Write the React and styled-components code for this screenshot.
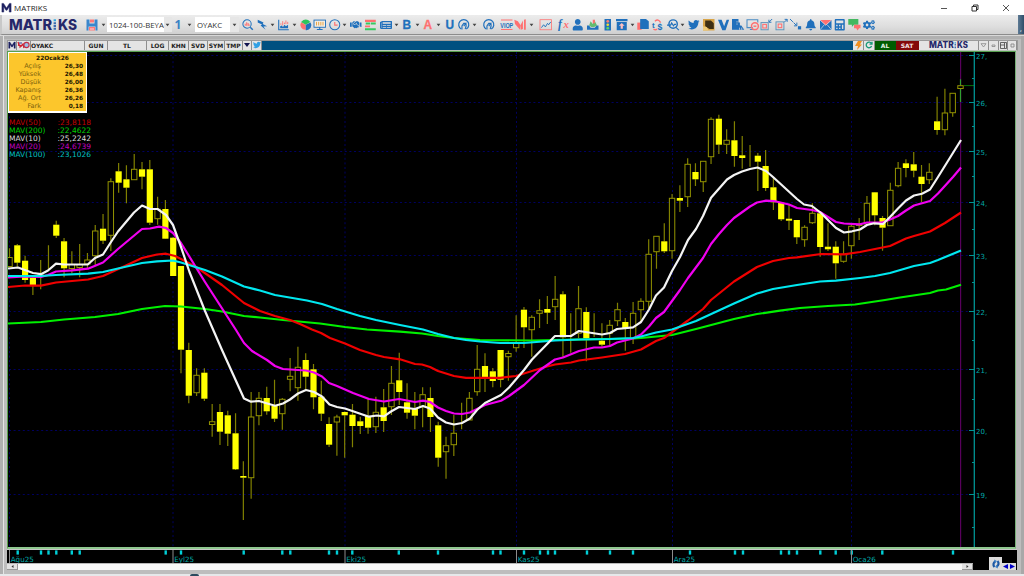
// Import dependencies
import React from 'react';
import styled, { createGlobalStyle } from 'styled-components';
import { FaHandshake, FaNewspaper, FaTwitter, FaBell, FaCalculator, FaCogs, FaUser } from 'react-icons/fa';

//----------------  Data  ----------------//
// Each candle: high, body top, body bottom, low, filled
const candles = [
    [248.3, 257.5, 266.5, 267, 0], [244, 245.3, 262.7, 267, 1], [255.7, 260.7, 280, 282.7, 1],
    [275, 277.7, 285, 295, 1], [260, 275, 276, 289.3, 0], [245.3, 255.3, 255.3, 270, 0],
    [220.7, 224.7, 235.7, 238, 1], [238, 241.3, 268.3, 277.3, 1], [251.3, 264.5, 268.5, 273.3, 0],
    [244, 264.5, 267.5, 277.3, 0], [253, 260, 264, 268, 0], [225, 231, 255.7, 265, 0],
    [214, 228.7, 240.7, 244, 1], [178.3, 181.7, 235.3, 251, 0], [163, 171.3, 182.7, 192.7, 1],
    [165.3, 179.3, 187.7, 203.3, 1], [154, 169.3, 179.7, 180, 0], [162, 169.3, 176.7, 189.3, 1],
    [160, 169.3, 222.7, 225, 1], [196.7, 209.3, 218.7, 224.7, 0], [200, 209, 238.7, 239, 1],
    [237, 237.7, 276, 276, 1], [266, 266, 349.7, 373.3, 1], [342.7, 350, 395.7, 403.3, 1],
    [368.3, 375.3, 392.7, 396, 0], [368.3, 372.7, 398.7, 401, 1], [404, 421.7, 424.5, 436.7, 0],
    [404, 412, 431.7, 445, 1], [410.7, 415.3, 433.7, 446, 1], [413.3, 433.3, 469.3, 470, 1],
    [461.3, 476, 477.7, 520, 1], [392, 417, 477.7, 498.7, 0], [392, 398.3, 415.7, 425.3, 0],
    [386.7, 398, 411.3, 414.7, 1], [379.7, 406, 418.7, 422, 1], [398, 399.3, 413.7, 429.7, 0],
    [358, 376.3, 379.3, 391.3, 0], [346.7, 367.3, 387.7, 400.7, 0], [353.3, 360, 376.7, 390, 1],
    [364, 369.3, 397.3, 409.3, 1], [380.7, 396.7, 413.7, 421, 1], [417.3, 424, 444.7, 447, 1],
    [414.7, 417, 422, 455.7, 0], [411.5, 412, 415.3, 457.7, 1], [404, 414.7, 426, 447.3, 1],
    [416.7, 421.3, 426, 434, 1], [398.3, 416, 427.7, 433.7, 1], [396.7, 412.3, 426.7, 433, 0],
    [389, 407.3, 421, 432, 1], [366, 383.3, 406.7, 415, 0], [352.7, 380.3, 392, 405, 1],
    [383.3, 402.3, 412.7, 418.7, 1], [392, 408.7, 415.7, 429.3, 1], [387.3, 394.7, 406.7, 427.3, 0],
    [387.3, 398, 417, 432, 1], [421.7, 425.3, 457.7, 466.7, 1], [436.7, 445.7, 451.7, 478.7, 0],
    [415, 433.3, 444.7, 456, 0], [402.7, 419.7, 419.7, 429.3, 0], [392, 398.3, 420, 420, 0],
    [345, 369.3, 391.7, 395.7, 0], [353.3, 366, 377.3, 392, 1], [368, 371.3, 381, 387.3, 1],
    [350, 350, 379.7, 387.3, 1], [350.7, 353.5, 356.7, 380.7, 0], [315.3, 343.3, 347.7, 351.7, 0],
    [307, 309.7, 327.3, 348, 1], [315.3, 317.3, 329.7, 356.7, 0], [299.3, 310.7, 313.3, 328, 0],
    [296, 309, 312.7, 324, 1], [276, 299.3, 306.7, 320, 0], [291.3, 294.3, 337.3, 357.3, 1],
    [313.3, 332.7, 332.7, 352.7, 0], [286, 308.7, 333.3, 338, 0], [307.3, 312, 338.3, 361.3, 1],
    [313.3, 332.7, 332.7, 337, 0], [323.3, 340.7, 344.7, 346.7, 1], [320, 325.3, 333.3, 346, 0],
    [302.7, 309.7, 320.7, 326, 0], [318, 322, 328.7, 350.7, 1], [302, 313.3, 338.6, 344, 0],
    [298.3, 301.3, 309.7, 321, 0], [239.3, 254.3, 301.3, 308, 0], [236, 236.3, 251.7, 268.7, 0],
    [223.3, 241.3, 251.3, 253, 1], [194, 198.3, 250.7, 258.7, 0], [185.3, 198, 200.7, 212, 1],
    [158.3, 164.3, 196.7, 207, 0], [163.3, 172, 179.3, 186, 1], [161, 161.3, 181.7, 192, 0],
    [117.3, 119.3, 156.7, 164, 0], [114.7, 118.7, 144.7, 154, 1], [129.3, 140.3, 144.3, 154, 0],
    [121.3, 140.3, 156, 166.7, 1], [136, 155.3, 158, 168.7, 1], [145, 155.5, 155.5, 166.7, 0],
    [153, 155.7, 161.7, 191, 1], [150, 166, 188, 191, 1], [178.3, 187.3, 202.3, 210, 1],
    [202, 202.7, 219.3, 221, 1], [205, 218.7, 220.7, 230, 1], [220, 220, 237.3, 244, 1],
    [225.3, 227.3, 239.7, 246.7, 0], [203.3, 213.3, 222.7, 224, 0], [211, 213.3, 247, 256.7, 1],
    [223.3, 246.7, 249.3, 251, 1], [241.3, 246.7, 263.3, 278.7, 1], [241.3, 254.3, 261.3, 262.7, 0],
    [225, 226.3, 245.7, 258.7, 0], [218, 224.5, 225.5, 240, 0], [196, 203.3, 224, 225, 0],
    [192, 192.3, 215.3, 225.3, 1], [216, 218, 227.7, 250.7, 1], [182.7, 190.3, 225.7, 226, 0],
    [162, 168.3, 185.7, 187.3, 0], [159.3, 163.3, 168, 177.3, 1], [152, 164.3, 170.7, 177.3, 1],
    [165, 176.7, 184, 202, 1], [163.3, 172.3, 179.7, 184, 0], [96.7, 121.3, 130, 134.7, 1],
    [88.7, 113, 129.7, 135.3, 0], [93, 93.3, 112.7, 116.7, 0], [79.3, 85.7, 88.5, 102, 0],
];

// Moving averages
const averages = [
    { color: '#00f000', points: '8,323.5 41,322 64,319.5 95,317 118,314 142,309 165,306 181,306.5 205,309 222,311.5 244,316 260,317.5 283,320 320,323.5 345,327 367,329.5 400,331.7 422,333.5 438,336 454,338 480,340 532,340.5 579,339.5 633,338.5 641,338 672,335 696,329 734,319 757,314 780,310.7 800,308 828,306 855,304.5 885,300 900,297.5 930,293 938,290.5 946,289.5 961,284.7' },
    { color: '#f00000', points: '8,287 25,285.5 41,285.7 56,282.5 88,279.5 103,276 126,265.5 142,258 157,254.5 166,253.7 175,256 183,260 197,267.5 222,285 244,303 260,311 275,316 290,320 300,324 312,329.5 321,333 330,338 345,343.5 360,350 376,355 384,357 400,359.3 415,364 422,364.5 430,367 438,371 454,376 466,377.8 500,377.8 516,376 532,371 547,366.5 555,364.5 571,362.5 579,360.5 602,357.5 625,354 641,349.5 656,341 664,338 688,320.5 703,309 711,300 734,281.5 757,267 773,261 789,258 797,257.3 821,254 844,254.3 860,252 875,249 890,246 906,238.5 914,236 930,231.5 945,223 961,212.5' },
    { color: '#f000f0', points: '8,277.5 25,276.5 41,277 48,275 56,271.5 72,270.3 88,268.7 103,262.5 118,249 142,229 150,228.5 159,226.7 166,228 173,233 181,243 205,282 236,330 244,343 252,351 267,360 275,366 283,369 298,370 306,370.5 314,372.5 322,376.5 329,383 337,386 353,393 369,399 384,401.5 399,399 415,402 423,400.7 430,402 438,407.5 446,411 454,413.5 462,414 470,412.5 485,405 501,400.7 509,396 524,385 540,370 555,359.5 563,357.5 579,351 594,347.5 602,347.5 610,346 617,342.5 633,338.5 641,334.5 649,326.5 656,318 664,312 672,301 680,290 688,278 703,258 711,244 719,234 727,225 734,218 750,206.5 757,202.5 766,200.7 774,201 789,204.5 797,208 812,210 820,212 828,217 836,222 844,223.5 860,224.3 867,222.5 883,222.3 890,219.5 898,216 906,210.5 914,205.5 930,201 938,193.5 953,177 961,167.5' },
    { color: '#00e8f0', points: '8,276 41,276 56,275 88,273.7 103,272 118,268.5 142,263 157,261.3 173,260.5 181,262.5 205,270 222,276.5 244,286.5 260,290.5 275,295 307,300.5 322,304 337,309 360,316 376,320 400,325 423,329.5 438,334 454,338 466,340 480,341.5 500,343 524,343 555,340.5 579,339.5 610,339 633,338 641,336.5 656,332.5 672,329.5 696,321 734,303.5 757,293.5 773,289 797,285 820,281.5 836,280.7 860,278 875,276 890,273 914,266 930,263 938,260 961,250.5' },
    { color: '#f4f4f4', points: '8,268.5 18,267.5 33,273 41,274.2 48,270.5 56,263.7 64,264.5 88,264.3 95,258 103,254.5 111,242 118,231.5 134,212.5 142,205.5 150,209 157.5,209 166,215 173,225 181,247 189.5,272 205,311 222,350 244,398.5 251,401.7 259,401 275,405.7 283,403.5 290,399.5 298,393.5 306,390 314,392 322,396.5 329.5,404.5 337,407 345,408.5 361,414 369,416.7 377,415.5 384,416.3 391,411.5 399,407 415,409 423,406 430,408.5 438,417.5 446,422.5 454,424.5 462,423 470,418.5 477,410 485,403 501,395 509,387.5 524,370 532,359.5 555,336 571,336 579,331 602,334.5 610,333 617,329 633,327.3 641,322 649,309.5 656,295.5 664,287.5 672,271 680,257 688,240 696,229 703,216 711,197.7 727,179.5 734,175 742,171.5 750,169 757.5,167.5 766,171 773,177 797,199 804,204.5 812,206 821,213 836,228 844,232.5 852,231.3 860,229.5 867,225 874,223.3 883,224 890,217 898,208.5 906,200.5 914,195.5 922,193.7 930,189.5 938,177 961,140' },
];

const prices = [[27, 55.5], [26, 102.5], [25, 151.5], [24, 202.5], [23, 255.5], [22, 311.5], [21, 369.5], [20, 430.5], [19, 494.5]];
const halfTicks = [78.5, 126.5, 176.5, 229.5, 282.5, 340.5, 399.5, 462.5, 527.5];
const months = [['Ağu25', 9.5], ['Eyl25', 173], ['Eki25', 345], ['Kas25', 516.5], ['Ara25', 672.5], ['Oca26', 851.5]];
const dayTicks = [17.7, 41, 48.5, 56.3, 71.8, 79.7, 165.7, 181, 243.7, 282.3, 290.3, 329, 337, 352.3, 398.8, 438, 493, 500.5, 524, 540, 548, 555, 587, 610, 633, 690, 735, 743, 781, 789, 797, 820.3, 835.7, 851.7, 882.3, 953];

const quote = [['Açılış', '26,30'], ['Yüksek', '26,48'], ['Düşük', '26,00'], ['Kapanış', '26,36'], ['Ağ. Ort', '26,26'], ['Fark', '0,18']];
const legend = [
    ['MAV(50)', ':23,8118', '#c00000'],
    ['MAV(200)', ':22,4622', '#00d000'],
    ['MAV(10)', ':25,2242', '#dcdcdc'],
    ['MAV(20)', ':24,6739', '#c000c0'],
    ['MAV(100)', ':23,1026', '#00c0c0'],
];

const candleX = (i) => 9.5 + i * 7.795;

//----------------  Styles  ----------------//
const GlobalStyle = createGlobalStyle`
    *{ box-sizing: border-box; }
    body{
        margin: 0;
        overflow: hidden;
        background: #c4c4c4;
    }
    svg{ display: block; flex: none; overflow: visible; }
`;
// Whole window
const Window = styled.div`
    width: 1024px;
    height: 576px;
    display: flex;
    flex-direction: column;
    font-family: 'Open Sans', 'Noto Sans', sans-serif;
    overflow: hidden;
`;
const TitleBar = styled.div`
    height: 15px;
    display: flex;
    align-items: center;
    background: #fff;
    padding: 0 14px 0 1px;
    gap: 2px;
    font-size: 8px;
    color: #222;
`;
const WindowButtons = styled.div`
    margin-left: auto;
    display: flex;
    gap: 23px;
`;
const ToolBar = styled.div`
    height: 20px;
    display: flex;
    align-items: center;
    background: linear-gradient(#ececec, #dedede 60%, #cfcfcf);
    border-left: 2px solid #c8c8c8;
    border-bottom: 1px solid #8c8c8c;
    padding-left: 7px;
`;
// Save button with its menu arrow
const SaveGroup = styled.div`
    display: flex;
    align-items: center;
    gap: 3px;
    margin-left: 9px;
    width: 21px;
`;
const Combo = styled.div`
    width: ${props => props.$w}px;
    height: 15px;
    margin-right: ${props => props.$gap || 0}px;
    display: flex;
    align-items: center;
    background: #fff;
    padding-left: 2px;
    font-size: 7.8px;
    color: #333;
    white-space: nowrap;
`;
const ComboText = styled.span`
    flex: 1;
`;
const ComboArrow = styled.span`
    width: 9px;
    height: 15px;
    display: flex;
    align-items: center;
    justify-content: center;
    background: #e6e6e6;
`;
const CountGroup = styled.div`
    display: flex;
    align-items: center;
    justify-content: center;
    gap: 6px;
    width: 23px;
    font-weight: bold;
    font-size: 12px;
    color: #3a82c4;
`;
const Tool = styled.div`
    width: ${props => props.$menu ? 21.45 : 14.6}px;
    height: 16px;
    margin-left: ${props => props.$sep ? 3.2 : 0}px;
    display: flex;
    align-items: center;
    flex: none;
    gap: 2px;
    padding-left: 1.3px;
`;
const ToolEdge = styled.div`
    margin-left: auto;
    width: 6px;
    height: 19px;
    background: linear-gradient(90deg, #5d7a94, #2f4d69);
    color: #fff;
    font-size: 7px;
    line-height: 27px;
    text-align: center;
`;
const Workspace = styled.div`
    flex: 1;
    display: flex;
    flex-direction: column;
    background: #bdbdbd;
    border-top: 1px solid #d8d8d8;
    padding: 4px 6px 0 7px;
    box-shadow: inset 3px 0 0 #b0b0b0, inset 4px 0 0 #e4e4e4, inset -3px 0 0 #a8a8a8, inset 0 3px 0 #b0b0b0;
`;
const Header = styled.div`
    height: 11px;
    display: flex;
    align-items: stretch;
    background: #005080;
    border: 1px solid #9a9a9a;
    border-bottom-color: #b8c4b8;
    font-family: 'DejaVu Sans', sans-serif;
    font-weight: bold;
    font-size: 6px;
    line-height: 7px;
    color: #222;
`;
const Cell = styled.div`
    width: ${props => props.$w}px;
    display: flex;
    align-items: center;
    justify-content: ${props => props.$left ? 'flex-start' : 'center'};
    background: ${props => props.$bg || '#e4e4e4'};
    color: ${props => props.$color || '#222'};
    border-right: 1px solid ${props => props.$bg || '#8e8e8e'};
    padding-bottom: 1px;
    white-space: nowrap;
`;
const HeaderSpace = styled.div`
    flex: 1;
`;
const ChartPane = styled.div`
    position: relative;
    height: 498px;
    background: #000;
    border: 1px solid #58a050;
    border-right: 1.5px solid #78b078;
    border-bottom: 2px solid #90c890;
    margin-right: 2px;
    overflow: hidden;
`;
// Sits on top of the chart
const Overlay = styled.div`
    position: absolute;
    left: 0;
    top: 0;
    font-family: 'DejaVu Sans', sans-serif;
`;
const QuoteBox = styled.div`
    width: 79px;
    height: 61px;
    background: #fcc62c;
    border: 1px solid #fff;
    border-width: 1px 1.5px 2px 1px;
    padding: 1px 3px 0 4px;
    font-size: 6.5px;
    line-height: 8px;
    color: #80640c;
`;
const QuoteTitle = styled.div`
    font-weight: bold;
    font-size: 5.9px;
    color: #1c1600;
    text-align: center;
    padding-left: 9px;
`;
const QuoteRow = styled.div`
    display: flex;
    justify-content: space-between;
    span{
        width: 28px;
        display: flex;
        justify-content: flex-end;
        white-space: nowrap;
    }
    b{
        font-size: 5.8px;
        color: #1c1600;
    }
`;
const Legend = styled.div`
    padding: 6px 0 0 1px;
    font-size: 7.5px;
    line-height: 8px;
`;
const LegendRow = styled.div`
    display: flex;
    color: ${props => props.$color};
    span{
        width: 48.5px;
    }
`;
const TimeAxis = styled.div`
    height: 14px;
    background: #000;
    border-top: 1px solid #c8c8c8;
    margin-right: 1px;
`;
const ScrollRow = styled.div`
    height: 7px;
    display: flex;
    background: #000;
    margin-right: 1px;
`;
const ScrollTrack = styled.div`
    width: 966px;
    display: flex;
    justify-content: space-between;
    background: #f8f8f8;
    border-top: 1px solid #b8b8b8;
`;
const ScrollButton = styled.div`
    width: ${props => props.$w}px;
    height: 6px;
    background: #e2e2e2;
    border-right: 1px solid #999;
    border-bottom: 1px solid #999;
    display: flex;
    align-items: center;
    justify-content: center;
`;
const Nav = styled.div`
    display: flex;
    align-items: flex-end;
    height: 13px;
    margin: -6px 1px 0 auto;
`;
const NavButton = styled.div`
    width: ${props => props.$w}px;
    height: ${props => props.$h}px;
    background: #dcdcdc;
    display: flex;
    align-items: center;
    justify-content: center;
`;
const Desktop = styled.div`
    height: 2px;
    background: #e6e8ea;
    display: flex;
    padding-left: 190px;
`;
const DesktopMark = styled.div`
    width: 9px;
    height: 2px;
    background: #2c4a5e;
    border-radius: 4px 4px 0 0;
`;

//----------------  Icons  ----------------//
const BLUE = '#2070bc';
const RED = '#ff7070';

const Caret = () => (
    <svg width="5" height="4" viewBox="0 0 5 4"><path d="M.6 .8h3.8L2.5 3.2z" fill="#444" /></svg>
);
const Letter = ({ text, color }) => (
    <text x="8" y="13.6" textAnchor="middle" fontFamily="Liberation Sans, sans-serif" fontWeight="bold" fontSize="16.5"
        fill={color} stroke={color} strokeWidth=".4">{text}</text>
);
const glyphs = {
    zoom: <g fill="none"><circle cx="7" cy="7" r="5.8" stroke={BLUE} strokeWidth="1.4" /><path d="M11.5 11.5l3.5 3.5" stroke={BLUE} strokeWidth="2" /><path d="M4.5 9.5v-3M6.5 9.5v-5M8.5 9.5v-4M10 9.5v-2" stroke={RED} strokeWidth="1.4" /></g>,
    bolt: <path d="M1 1l8 4-1 2 6 3-5 .3L12 15 5 9l2-1.5L1 5z" fill={BLUE} />,
    area: <g><path d="M1 1v14h14" stroke={BLUE} strokeWidth="1.5" fill="none" /><path d="M3 13v-3l2-1 2 2 2-3 2 2 3-2v5z" fill={BLUE} /><path d="M4 6v2M6.500 3v6M9 5v2M11 2v5M13.500 4v3" stroke={RED} strokeWidth="1.2" /></g>,
    pie: <g><path d="M8 8L1.5 4.5A7 7 0 0 0 8 15z" fill={RED} /><path d="M8 8V15.5a7 7 0 0 0 6.7-10.8z" fill={BLUE} /><path d="M8 8L1.5 4.2Q8-2.5 14.5 4.2z" fill="#2fc45c" /></g>,
    monitor: <g><rect x="0" y="1.500" width="16" height="10" fill="#f4efe4" stroke={BLUE} strokeWidth="1.3" /><path d="M8 11v3M4 14.5h8" stroke={BLUE} strokeWidth="1.5" /><path d="M3.5 4v5M6.500 4v5M9.5 4v5M12.500 4v5" stroke="#e8a03c" strokeWidth="1.3" /></g>,
    clock: <g fill="none"><circle cx="8" cy="8" r="7" stroke={BLUE} strokeWidth="1.4" /><path d="M8 4v4.5h4" stroke={RED} strokeWidth="1.6" /></g>,
    depth: <g><path d="M0 1h15v3H0zM0 9h7v2.6H0z" fill={RED} /><path d="M8 5h7v2.6H8zM0 13h15v2.6H0zM1 5h6v2.6H1z" fill="#36c860" /></g>,
    b: <Letter text="B" color={BLUE} />,
    a: <Letter text="A" color={RED} />,
    u: <Letter text="U" color={BLUE} />,
    gauge: <g fill="none" stroke={BLUE}><path d="M4.5 14a7 7 0 1 1 7 0" strokeWidth="1.7" /><path d="M5.500 14.500V9.5L8 6h3L8 10M10.500 6c2 2 .5 5-.5 8" strokeWidth="1.6" /></g>,
    viop: <g><path d="M0 1.500h16M0 14.5h16" stroke={RED} strokeWidth="1.4" /><text x="-1" y="12" fontFamily="Liberation Sans" fontWeight="bold" fontSize="10" fill={BLUE} textLength="18" lengthAdjust="spacingAndGlyphs">VIOP</text></g>,
    m: <g><path d="M-1 1l5 2 4 6-1 6-7-8z" fill={RED} /><path d="M8 8l3-6v12l-3 1zM12.500 1l2.500-.5V15h-2.500z" fill={RED} /></g>,
    trend: <g fill="none"><rect x="0" y="1" width="16" height="14" stroke={RED} strokeWidth="1.1" /><path d="M2 12l3-4 2.5 3 3-5 1.5 2 3-4" stroke={BLUE} strokeWidth="1.3" /></g>,
    fx: <g><text x="0" y="12.5" fontFamily="Liberation Serif" fontStyle="italic" fontWeight="bold" fontSize="16" fill={BLUE}>f</text><text x="7.5" y="12.5" fontFamily="Liberation Serif" fontStyle="italic" fontWeight="bold" fontSize="15" fill={RED}>x</text></g>,
    inbox: <g><path d="M0 9h3l2 3h6l2-3h3v6H0z" fill={BLUE} /><path d="M3 9l2-6 3 4 2-6 4 8-4 2H6z" fill="#64bb70" /><path d="M8 1h3v5H8z" fill={RED} /></g>,
    traffic: <g><rect x="3.5" y="0" width="9" height="16" fill={BLUE} /><circle cx="8" cy="3.3" r="1.9" fill="#ff8070" /><circle cx="8" cy="8" r="1.9" fill="#f4dc30" /><circle cx="8" cy="12.7" r="1.9" fill="#60d860" /></g>,
    upload: <g><path d="M0 0h16v3H0zM1 4h14v11.500H1z" fill={BLUE} /><path d="M8 5.5l4 4H9.5v4h-3v-4H4z" fill="#ffc0c0" /></g>,
    copy: <g><path d="M-1 5h6v10h-6z" fill={RED} /><path d="M3 0h8l4 3v11H3z" fill={BLUE} /></g>,
    swap: <g><text x="0" y="12" fontFamily="Liberation Sans" fontWeight="bold" fontSize="11" fill={BLUE}>t</text><text x="7.5" y="15" fontFamily="Liberation Sans" fontWeight="bold" fontSize="12" fill={BLUE}>$</text><path d="M4 3q5-4 8 2M2 14q3 2 5 0" stroke={RED} strokeWidth="1.8" fill="none" /></g>,
    search: <g fill="none"><circle cx="8.500" cy="7" r="5.8" stroke={BLUE} strokeWidth="2" /><path d="M12.500 11.500l4 4M0 8.500h5l1.500-3 2.500 4 1.500-2h2" stroke={BLUE} strokeWidth="1.5" /></g>,
    gold: <g><rect x="0" y="0" width="16" height="16" fill="#d8a448" /><path d="M3 2h8l4 4v8H9L3 10z" fill="#3c2e14" /><path d="M0 10l5 1 3 5H0z" fill="#ecc878" /></g>,
    v: <path d="M0 1h5l3.500 9L12 1h3.5L10.500 15.5H6z" fill={BLUE} />,
    building: <g><path d="M0 0h9v15H0z" fill={BLUE} /><path d="M8 5h3v4h2l4 6H8z" fill={BLUE} /><path d="M6 4h2M6 7h2M10.500 12v3M13.500 12v3" stroke="#dcdcdc" strokeWidth="1" /></g>,
    block: <g fill="none"><path d="M8 12H0V1h15v4M4 14.5h5" stroke="#4b8cc4" strokeWidth="1.5" /><circle cx="11" cy="10" r="4.8" stroke={RED} strokeWidth="2" /><path d="M9 10h4" stroke={RED} strokeWidth="2" /></g>,
    shrink: <g fill="none"><rect x="0" y="5" width="10" height="10" stroke="#5b92b8" strokeWidth="1.3" /><rect x="2.5" y="7.500" width="5" height="5" stroke={RED} strokeWidth="1.5" /><path d="M15.5 0l-4 4M11 1v3.5h3.5" stroke={BLUE} strokeWidth="1.3" /></g>,
    expand: <g fill="none"><rect x="0" y="4" width="11" height="11" stroke="#5b92b8" strokeWidth="1.3" /><rect x="3" y="7" width="5" height="5" stroke={RED} strokeWidth="1.5" /><path d="M11.5 4.500l4-4M12 .5h3.5V4" stroke={BLUE} strokeWidth="1.3" /></g>,
    pin: <g><path d="M0 0l4 4M5 5l4 4M9.500 5v4.500H5.500" stroke={BLUE} strokeWidth="1.3" fill="none" /><rect x="11" y="10" width="4.5" height="4.5" fill={BLUE} /></g>,
    mail: <g><path d="M0 1.500h16V15H0z" fill={BLUE} /><path d="M0 1.500h16L8 9z" fill={RED} /><path d="M0 1.500l8 7 8-7M0 15l6-7M16 15l-6-7" stroke="#e8eef4" strokeWidth=".9" fill="none" /></g>,
    chat: <g><path d="M-1 0h14v8H7l-3 3V8h-5z" fill="#44b860" /><path d="M7 8h9v5h-2l-2 3-2-3H7z" fill={RED} /></g>,
};
const packs = {
    handshake: FaHandshake, news: FaNewspaper, twitter: FaTwitter, bell: FaBell, calc: FaCalculator, cogs: FaCogs, user: FaUser,
};
const packScale = { cogs: 12, news: 12 };

// name, has menu, starts a new group
const tools = [
    ['zoom'], ['bolt', 1], ['area', 1], ['pie'], ['monitor'], ['clock', 1], ['handshake'], ['depth'], ['news', 1],
    ['b', 1], ['a', 1], ['u'], ['gauge', 1], ['gauge', 0, 1], ['viop', 0, 1], ['m', 1], ['trend', 0, 1], ['fx', 0, 1],
    ['user'], ['inbox'], ['traffic'], ['upload', 1], ['copy'], ['swap'], ['search', 1], ['twitter'], ['gold'], ['v'],
    ['building'], ['block'], ['shrink'], ['expand'], ['pin'], ['bell'], ['mail'], ['calc'], ['chat'], ['cogs'],
];

const ToolIcon = ({ name }) => {
    const Pack = packs[name];
    if (Pack) {
        return <Pack size={packScale[name] || 11.5} color={BLUE} />;
    }
    return <svg width="11.5" height="11.5" viewBox="0 0 16 16">{glyphs[name]}</svg>;
};

const MLogo = ({ size }) => (
    <svg width={size} height={size} viewBox="0 0 12 12">
        <path d="M1 11V1.5h1.8L6 6.5l3.2-5H11V11H9V5.3L6.6 9H5.4L3 5.3V11z" fill="#1d2160" stroke="#1d2160" strokeWidth=".5" />
    </svg>
);

// Wordmark with the dotted blue i
const Wordmark = ({ width, height }) => (
    <svg width={width} height={height} viewBox="0 0 68 12">
        <g fontFamily="Inter, sans-serif" fontWeight="800" fontSize="14.4" fill="#25286a">
            <text x="0" y="11.2" textLength="43" lengthAdjust="spacingAndGlyphs">MATR</text>
            <text x="49" y="11.2" textLength="19" lengthAdjust="spacingAndGlyphs">KS</text>
        </g>
        <path d="M44.6 4.2h2.4M44.6 7h2.4M44.6 9.8h2.4" stroke="#3a6cb0" strokeWidth="1.9" />
        <path d="M44.6 1.3h2.4" stroke="#30a8e0" strokeWidth="2" />
    </svg>
);

//----------------  Chart  ----------------//
const Candle = ({ x, data, last }) => {
    const [high, top, bottom, low, filled] = data;
    const wick = last ? '#30a030' : '#808000';
    return (
        <g>
            <path d={`M${x} ${high}V${top}M${x} ${bottom}V${low}`} stroke={wick} strokeWidth="1.2" />
            {filled ?
                <rect x={x - 3.1} y={top} width="6.2" height={bottom - top} fill="#ffff00" />
                : <rect x={x - 2.7} y={top} width="5.4" height={bottom - top} fill="#000" stroke="#949400" strokeWidth="1" />}
        </g>
    );
};

const PriceChart = () => (
    <svg width="1006" height="495" viewBox="8 52 1006 495">
        <g stroke="#000060" strokeWidth="1" strokeDasharray="2 2.6">
            {prices.map(([p, y]) => <path key={p} d={`M9 ${y}H968`} />)}
            {months.map(([m, x]) => <path key={m} d={`M${x} 52V548`} />)}
        </g>
        <path d="M960.6 52V548" stroke="#58005c" strokeWidth="1.2" />
        {candles.map((c, i) => <Candle key={i} x={candleX(i)} data={c} last={i === candles.length - 1} />)}
        <path d="M964 85.6H974" stroke="#087008" />
        <g fill="none" strokeWidth="2.2" strokeLinejoin="round">
            {averages.map(a => <polyline key={a.color} points={a.points} stroke={a.color} />)}
        </g>
        <g stroke="#009494" strokeWidth="1">
            <path d="M974.3 52V548" strokeWidth="1.3" />
            {prices.map(([p, y]) => <path key={p} d={`M969 ${y}h5`} />)}
            {halfTicks.map(y => <path key={y} d={`M972 ${y}h2`} />)}
        </g>
        <g fontFamily="DejaVu Sans, sans-serif" fontSize="7" fill="#00a8a8">
            {prices.map(([p, y]) => <text key={p} x="976" y={y + 3}>{p},</text>)}
        </g>
    </svg>
);

const TimeScale = () => (
    <svg width="1009" height="13" viewBox="7 550 1009 13">
        {dayTicks.map(x => <rect key={x} x={x - 1.2} y="550.4" width="2.4" height="4.2" fill="#00d0d8" />)}
        {months.map(([m, x]) => (
            <g key={m}>
                <path d={`M${x} 550V563`} stroke="#8c8c8c" />
                <text x={x + 1.2} y="561.6" fontFamily="DejaVu Sans, sans-serif" fontSize="7.2" fill="#00a8a8">{m}</text>
            </g>
        ))}
    </svg>
);

// Exported component
const App = () => {
    // Render content
    return (
        <Window>
            <GlobalStyle />
            <TitleBar>
                <MLogo size={11} />
                <span>MATRIKS</span>
                <WindowButtons>
                    <svg width="8" height="8" viewBox="0 0 8 8"><path d="M1 4.5h6" stroke="#555" /></svg>
                    <svg width="8" height="8" viewBox="0 0 8 8"><path d="M1 2.5h4.5V7H1zM2.5 2.5V1H7v4.5H5.5" stroke="#333" fill="none" /></svg>
                    <svg width="8" height="8" viewBox="0 0 8 8"><path d="M1 1l6 6M7 1l-6 6" stroke="#444" strokeWidth=".9" /></svg>
                </WindowButtons>
            </TitleBar>
            <ToolBar>
                <Wordmark width={68} height={12} />
                <SaveGroup>
                    <svg width="12" height="12" viewBox="0 0 12 12">
                        <path d="M.5 .5h3v4h5v-4h3v11h-2v-4h-7v4h-2z" fill="#3a86cc" />
                        <path d="M4 .5h4v3H4zM3 8h6v3.5H3z" fill="#ff7878" />
                        <path d="M4 10h4" stroke="#fff" strokeWidth=".7" />
                    </svg>
                    <Caret />
                </SaveGroup>
                <Combo $w={65}>
                    <ComboText>1024-100-BEYA</ComboText>
                    <ComboArrow><Caret /></ComboArrow>
                </Combo>
                <CountGroup>1<Caret /></CountGroup>
                <Combo $w={44} $gap={2}>
                    <ComboText>OYAKC</ComboText>
                    <ComboArrow><Caret /></ComboArrow>
                </Combo>
                {tools.map(([name, menu, sep], i) => (
                    <Tool key={i} $menu={menu} $sep={sep}>
                        <ToolIcon name={name} />
                        {menu ? <Caret /> : ''}
                    </Tool>
                ))}
                <ToolEdge>,</ToolEdge>
            </ToolBar>
            <Workspace>
                <Header>
                    <Cell $w={9}><MLogo size={8} /></Cell>
                    <Cell $w={14}>
                        <svg width="13" height="8" viewBox="0 0 13 8"><path d="M1 1l2 5 3-3 1 4M1 4l4 1" stroke="#d02030" strokeWidth="1.3" fill="none" /><circle cx="9.5" cy="4" r="2.6" stroke="#c03048" strokeWidth="1.1" fill="#9cc0e8" /><path d="M2 2h3" stroke="#303c9c" /></svg>
                    </Cell>
                    <Cell $w={54} $left>OYAKC</Cell>
                    <Cell $w={23}>GUN</Cell>
                    <Cell $w={39}>TL</Cell>
                    <Cell $w={22}>LOG</Cell>
                    <Cell $w={20}>KHN</Cell>
                    <Cell $w={19}>SVD</Cell>
                    <Cell $w={17}>SYM</Cell>
                    <Cell $w={18}>TMP</Cell>
                    <Cell $w={9}><svg width="6" height="4" viewBox="0 0 6 4"><path d="M0 0h6L3 4z" fill="#101450" /></svg></Cell>
                    <Cell $w={10}><FaTwitter size={8} color="#30a0e4" /></Cell>
                    <HeaderSpace />
                    <Cell $w={11}><svg width="7" height="9" viewBox="0 0 7 9"><path d="M3 0h4L5 3.5h2L2 9l1-4H0z" fill="#f09020" /></svg></Cell>
                    <Cell $w={11}><svg width="8" height="8" viewBox="0 0 8 8"><path d="M6.4 2.5A2.8 2.8 0 1 0 6.6 5M7 .8v2.4H4.5" stroke="#189878" strokeWidth="1.3" fill="none" /></svg></Cell>
                    <Cell $w={21} $bg="#005c00" $color="#e8f4e8">AL</Cell>
                    <Cell $w={23} $bg="#840808" $color="#f4e4e4">SAT</Cell>
                    <Cell $w={60}><Wordmark width={39} height={6.9} /></Cell>
                    <Cell $w={10}><svg width="7" height="5" viewBox="0 0 7 5"><path d="M1 .7h5L3.5 4z" stroke="#888" fill="none" strokeWidth=".8" /></svg></Cell>
                    <Cell $w={10}><svg width="5" height="5" viewBox="0 0 5 5"><path d="M1 2h3v1.5H1z" stroke="#888" fill="none" strokeWidth=".8" /></svg></Cell>
                    <Cell $w={9}><svg width="7" height="7" viewBox="0 0 7 7"><path d="M.5.5h6v6h-6zM.5 3h4M4.5 1v5" stroke="#444" fill="none" strokeWidth=".8" /></svg></Cell>
                    <Cell $w={9}><svg width="5" height="5" viewBox="0 0 5 5"><path d="M1 1h3v3H1z" stroke="#888" fill="none" strokeWidth=".9" /></svg></Cell>
                </Header>
                <ChartPane>
                    <PriceChart />
                    <Overlay>
                        <QuoteBox>
                            <QuoteTitle>22Ocak26</QuoteTitle>
                            {quote.map(([label, value]) => (
                                <QuoteRow key={label}><span>{label}</span><b>{value}</b></QuoteRow>
                            ))}
                        </QuoteBox>
                        <Legend>
                            {legend.map(([name, value, color]) => (
                                <LegendRow key={name} $color={color}><span>{name}</span>{value}</LegendRow>
                            ))}
                        </Legend>
                    </Overlay>
                </ChartPane>
                <TimeAxis><TimeScale /></TimeAxis>
                <ScrollRow>
                    <ScrollTrack>
                        <ScrollButton $w={11}><svg width="3" height="3" viewBox="0 0 3 3"><path d="M2.5 0v3L.5 1.5z" fill="#333" /></svg></ScrollButton>
                        <ScrollButton $w={11}><svg width="3" height="3" viewBox="0 0 3 3"><path d="M.5 0v3l2-1.5z" fill="#333" /></svg></ScrollButton>
                    </ScrollTrack>
                    <Nav>
                        <NavButton $w={13} $h={13}>
                            <svg width="10" height="10" viewBox="0 0 10 10"><path d="M3.5 8A3.6 3.6 0 0 1 4.5 2.2M6.5 2a3.6 3.6 0 0 1-1 5.8" stroke="#1c58a4" strokeWidth="2.2" fill="none" /><path d="M3 .5L6 2 4 4.5zM7 9.5L4 8l2-2.5z" fill="#4484c8" /></svg>
                        </NavButton>
                        <NavButton $w={7} $h={7}><svg width="5" height="5" viewBox="0 0 5 5"><path d="M5 0v5L0 2.5z" fill="#0000c8" /></svg></NavButton>
                        <NavButton $w={7} $h={7}><svg width="5" height="5" viewBox="0 0 5 5"><path d="M0 0v5l5-2.5z" fill="#0000c8" /></svg></NavButton>
                    </Nav>
                </ScrollRow>
            </Workspace>
            <Desktop><DesktopMark /></Desktop>
        </Window>
    )
};

export default App;
